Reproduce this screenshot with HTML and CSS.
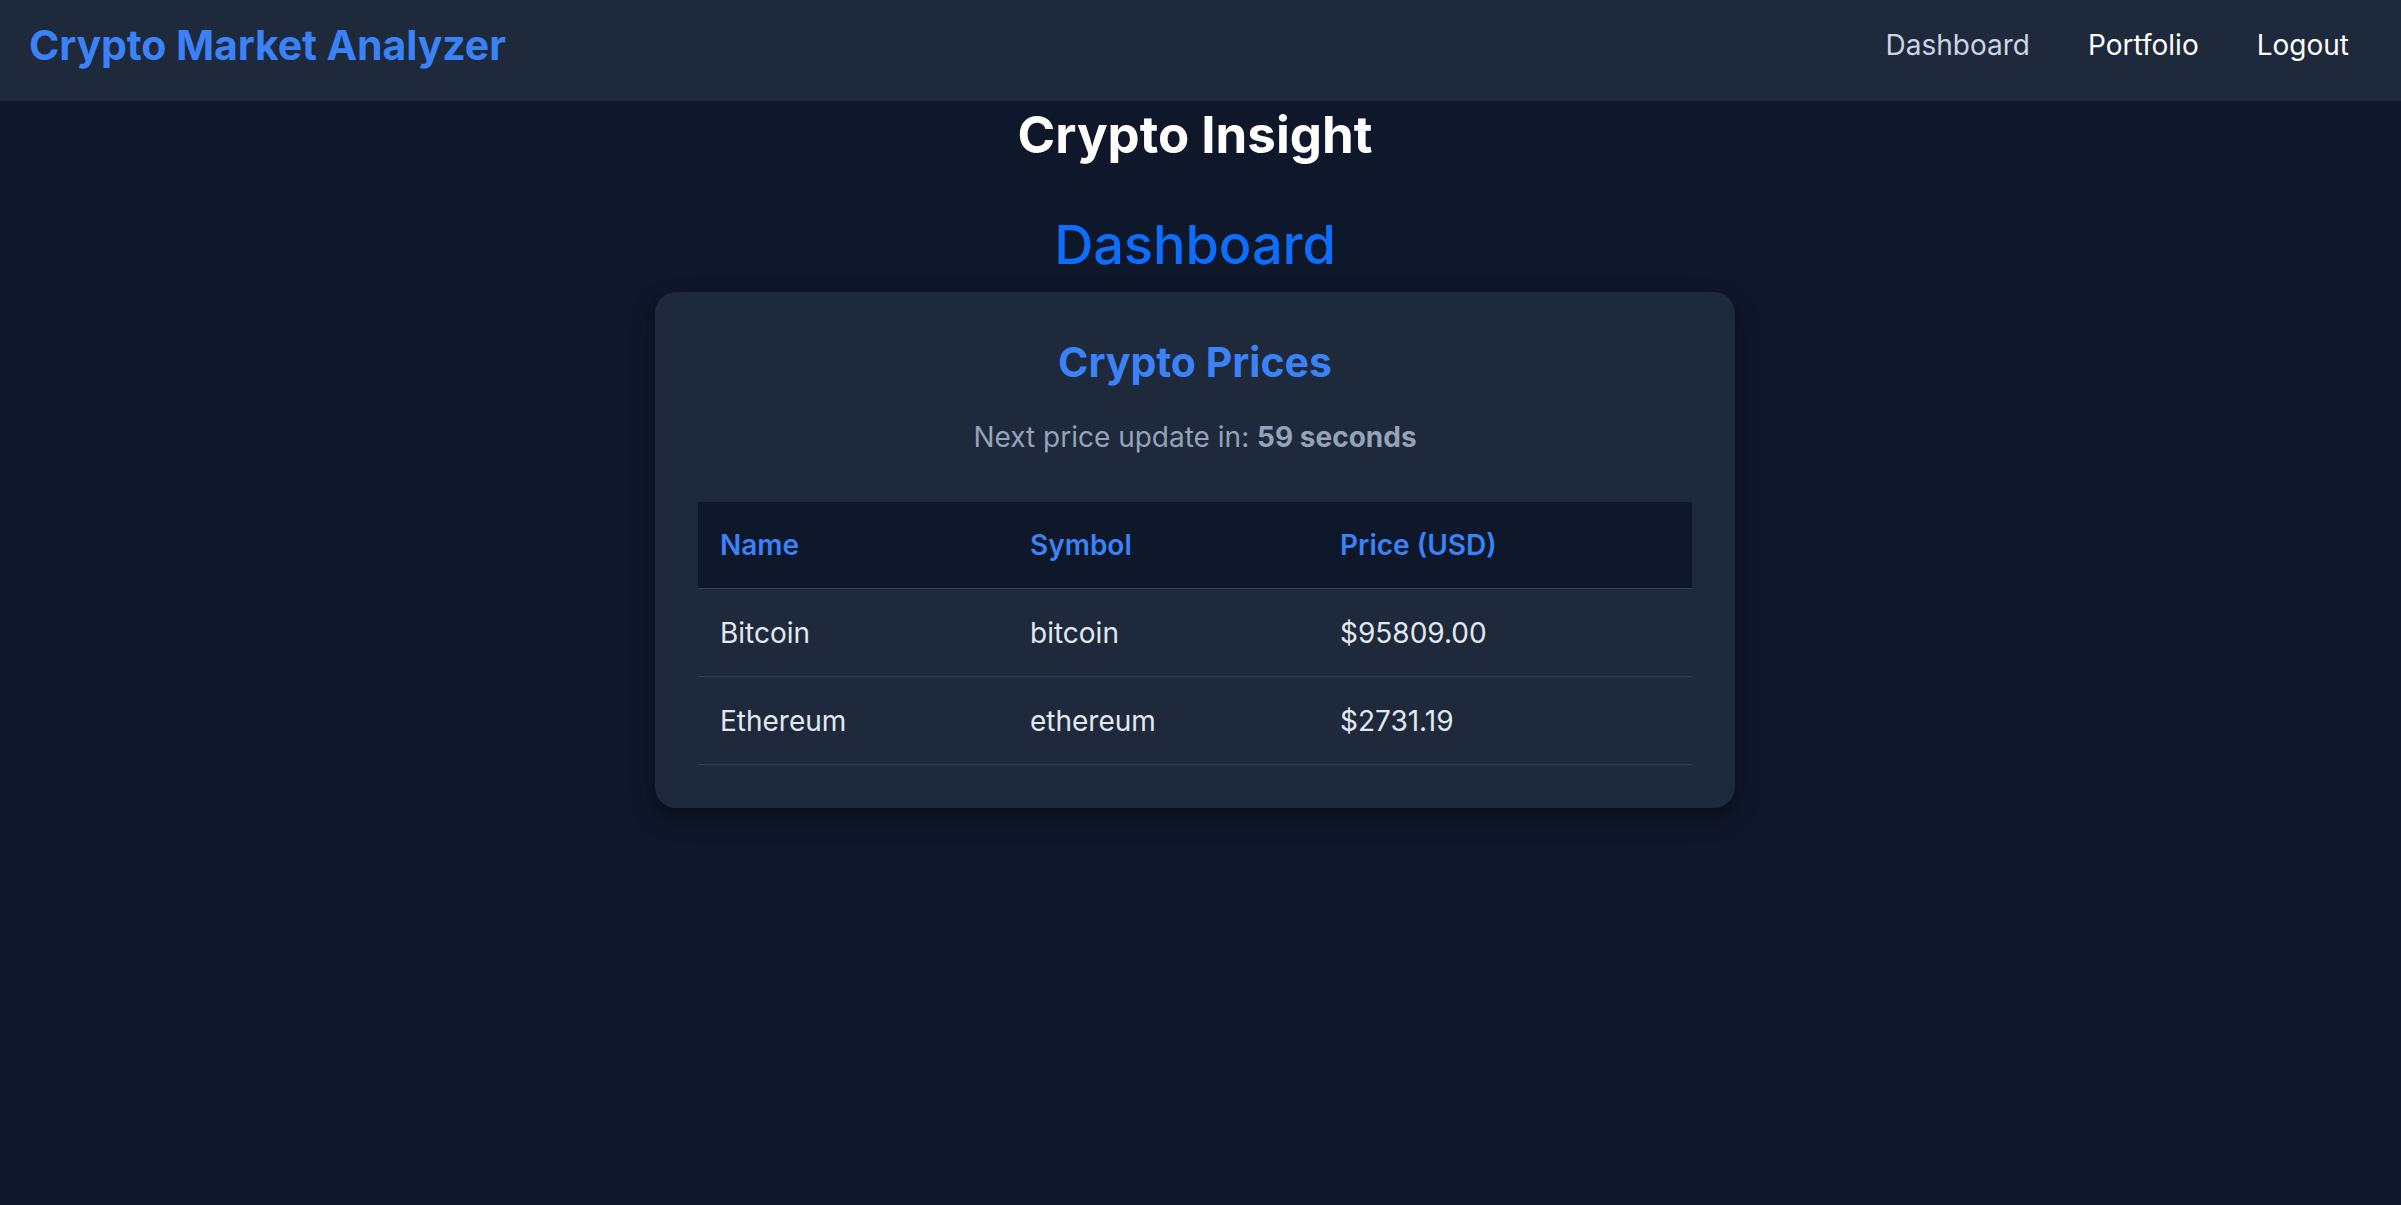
FILE: index.html
```html
<!DOCTYPE html>
<html lang="en">
<head>
<meta charset="utf-8">
<title>Crypto Market Analyzer</title>
<link rel="stylesheet" href="styles.css">
</head>
<body>
<nav class="navbar">
  <a class="brand" href="#">Crypto Market Analyzer</a>
  <div class="nav-links">
    <a class="nav-link nav-link-muted" href="#">Dashboard</a>
    <a class="nav-link" href="#">Portfolio</a>
    <a class="nav-link" href="#">Logout</a>
  </div>
</nav>
<main class="main">
  <h1 class="site-title">Crypto Insight</h1>
  <h1 class="page-title">Dashboard</h1>
  <section class="card">
    <h2 class="card-title">Crypto Prices</h2>
    <p class="update-note">Next price update in: <strong>59 seconds</strong></p>
    <table class="price-table">
      <thead>
        <tr>
          <th class="col-name">Name</th>
          <th class="col-symbol">Symbol</th>
          <th class="col-price">Price (USD)</th>
        </tr>
      </thead>
      <tbody>
        <tr>
          <td>Bitcoin</td>
          <td>bitcoin</td>
          <td>$95809.00</td>
        </tr>
        <tr>
          <td>Ethereum</td>
          <td>ethereum</td>
          <td>$2731.19</td>
        </tr>
      </tbody>
    </table>
  </section>
</main>
</body>
</html>
```

FILE: styles.css
```css
* { box-sizing: border-box; }

html, body {
  margin: 0;
  padding: 0;
}

body {
  background: #0f172a;
  font-family: Inter, "Noto Sans", "Liberation Sans", sans-serif;
  color: #ffffff;
  min-height: 1205px;
}

.navbar {
  height: 101px;
  background: #1e293b;
  display: flex;
  align-items: center;
  justify-content: space-between;
  padding: 0 23px 12px 29px;
}

.brand {
  color: #3b82f6;
  font-size: 41px;
  font-weight: 700;
  text-decoration: none;
  letter-spacing: -0.1px;
}

.nav-links {
  display: flex;
  align-items: center;
}

.nav-link {
  color: #ffffff;
  font-size: 28px;
  text-decoration: none;
  padding: 0 29px;
}

.nav-link-muted {
  color: #cbd5e1;
}

.main {
  display: flex;
  flex-direction: column;
  align-items: center;
  padding-right: 11px;
}

.site-title {
  margin: 3px 0 0;
  font-size: 51px;
  line-height: 1.2;
  font-weight: 700;
  color: #ffffff;
}

.page-title {
  margin: 48px 0 0;
  font-size: 54px;
  line-height: 1.2;
  font-weight: 500;
  color: #0d6efd;
}

.card {
  margin-top: 14px;
  width: 1080px;
  background: #1e293b;
  border-radius: 21px;
  padding: 42px 43px 43px;
  box-shadow: 0 10px 25px rgba(0, 0, 0, 0.25), 0 4px 10px rgba(0, 0, 0, 0.15);
  text-align: center;
}

.card-title {
  margin: 0;
  font-size: 41px;
  line-height: 56px;
  font-weight: 700;
  color: #3b82f6;
}

.update-note {
  margin: 26px 0 0;
  font-size: 28px;
  line-height: 42px;
  color: #94a3b8;
}

.update-note strong {
  font-weight: 700;
}

.price-table {
  margin-top: 44px;
  width: 100%;
  border-collapse: collapse;
  text-align: left;
  table-layout: fixed;
}

.price-table th,
.price-table td {
  padding: 0 22px;
  font-size: 28px;
  line-height: 42px;
  border-bottom: 1.5px solid #334155;
}

.price-table th {
  height: 87px;
  background: #0f172a;
  color: #3b82f6;
  font-weight: 600;
}

.price-table td {
  height: 88px;
  color: #e2e8f0;
  font-weight: 400;
}

.col-name { width: 310px; }
.col-symbol { width: 310px; }
.col-price { width: auto; }
```
